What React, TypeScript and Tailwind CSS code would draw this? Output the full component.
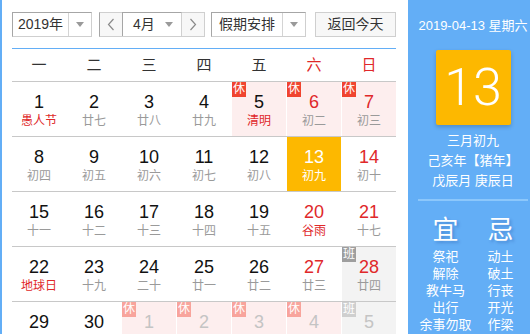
import React from "react";

type Cell = {
  d: number;
  l: string;
  red?: boolean;
  lred?: boolean;
  tag?: "休" | "班";
  sel?: boolean;
  faded?: boolean;
};

const rows: Cell[][] = [
  [
    { d: 1, l: "愚人节", lred: true },
    { d: 2, l: "廿七" },
    { d: 3, l: "廿八" },
    { d: 4, l: "廿九" },
    { d: 5, l: "清明", lred: true, tag: "休" },
    { d: 6, l: "初二", red: true, tag: "休" },
    { d: 7, l: "初三", red: true, tag: "休" },
  ],
  [
    { d: 8, l: "初四" },
    { d: 9, l: "初五" },
    { d: 10, l: "初六" },
    { d: 11, l: "初七" },
    { d: 12, l: "初八" },
    { d: 13, l: "初九", sel: true },
    { d: 14, l: "初十", red: true },
  ],
  [
    { d: 15, l: "十一" },
    { d: 16, l: "十二" },
    { d: 17, l: "十三" },
    { d: 18, l: "十四" },
    { d: 19, l: "十五" },
    { d: 20, l: "谷雨", red: true, lred: true },
    { d: 21, l: "十七", red: true },
  ],
  [
    { d: 22, l: "地球日", lred: true },
    { d: 23, l: "十九" },
    { d: 24, l: "二十" },
    { d: 25, l: "廿一" },
    { d: 26, l: "廿二" },
    { d: 27, l: "廿三", red: true },
    { d: 28, l: "廿四", red: true, tag: "班" },
  ],
  [
    { d: 29, l: "廿五" },
    { d: 30, l: "廿六" },
    { d: 1, l: "廿七", tag: "休", faded: true },
    { d: 2, l: "廿八", tag: "休", faded: true },
    { d: 3, l: "廿九", tag: "休", faded: true },
    { d: 4, l: "三十", tag: "休", faded: true },
    { d: 5, l: "立夏", tag: "班", faded: true },
  ],
];

const weekdays = ["一", "二", "三", "四", "五", "六", "日"];

function Caret() {
  return (
    <svg width="8" height="5" viewBox="0 0 8 5">
      <path d="M0 0 L8 0 L4 5 Z" fill="#9a9a9a" />
    </svg>
  );
}

function Chevron({ dir }: { dir: "l" | "r" }) {
  return (
    <svg width="8" height="13" viewBox="0 0 8 13">
      <path
        d={dir === "l" ? "M6.5 1 L1.5 6.5 L6.5 12" : "M1.5 1 L6.5 6.5 L1.5 12"}
        fill="none"
        stroke="#8a8a8a"
        strokeWidth="1.2"
      />
    </svg>
  );
}

function DayCell({ c }: { c: Cell }) {
  let bg = "bg-white";
  if (c.sel) bg = "bg-[#fdb800]";
  else if (c.tag === "休") bg = "bg-[#fdeeee]";
  else if (c.tag === "班") bg = "bg-[#f3f3f3]";

  let numColor = "text-[#111]";
  if (c.sel) numColor = "text-white";
  else if (c.faded) numColor = "text-[#c4c4c4]";
  else if (c.red) numColor = "text-[#e0282a]";

  let lColor = "text-[#9a9a9a]";
  if (c.sel) lColor = "text-white";
  else if (c.faded) lColor = "text-[#cccccc]";
  else if (c.lred) lColor = "text-[#e0282a]";

  let badge = "";
  if (c.tag === "休") badge = c.faded ? "bg-[#f8a49c]" : "bg-[#f0442f]";
  if (c.tag === "班") badge = c.faded ? "bg-[#cfcfcf]" : "bg-[#9e9e9e]";

  return (
    <div className={`relative h-[54px] ${bg} flex flex-col items-center pt-[10px]`}>
      {c.tag && (
        <div
          className={`absolute left-0 top-0 w-[14px] h-[15px] ${badge} text-white text-[12px] leading-[15px] text-center`}
        >
          {c.tag}
        </div>
      )}
      <div className={`text-[18px] leading-[20px] ${numColor}`}>{c.d}</div>
      <div className={`text-[12px] leading-[16px] mt-[1px] ${lColor}`}>{c.l}</div>
    </div>
  );
}

export default function App() {
  return (
    <div
      className="w-[530px] h-[334px] overflow-hidden flex bg-white"
      style={{ fontFamily: '"Liberation Sans", "Noto Sans CJK SC", sans-serif' }}
    >
      <div className="w-[2px] shrink-0 bg-[#63aef6]" />
      <div className="w-[406px] shrink-0 pl-[10px] pr-[12px] pt-[12px]">
        {/* toolbar */}
        <div className="flex h-[25px] text-[14px] text-[#333]">
          <div className="w-[80px] flex border border-[#cfcfcf] border-t-[#a6a6a6] border-l-[#a6a6a6]">
            <div className="flex-1 flex items-center justify-center">2019年</div>
            <div className="w-[23px] border-l border-[#d4d4d4] flex items-center justify-center">
              <Caret />
            </div>
          </div>
          <div className="ml-[7px] w-[106px] flex border border-[#cfcfcf] border-l-[#a6a6a6]">
            <div className="w-[22px] bg-[#f7f7f7] flex items-center justify-center">
              <Chevron dir="l" />
            </div>
            <div className="w-[60px] flex items-center border-l border-r border-[#d0d0d0] border-l-[#a6a6a6] border-t border-t-[#a6a6a6] -mt-px pl-[10px] pr-[8px] justify-between bg-white">
              <span>4月</span>
              <Caret />
            </div>
            <div className="flex-1 bg-[#f7f7f7] flex items-center justify-center">
              <Chevron dir="r" />
            </div>
          </div>
          <div className="ml-[6px] w-[95px] flex border border-[#cfcfcf] border-t-[#a6a6a6] border-l-[#a6a6a6]">
            <div className="flex-1 flex items-center justify-center">假期安排</div>
            <div className="w-[23px] border-l border-[#d4d4d4] flex items-center justify-center">
              <Caret />
            </div>
          </div>
          <div className="ml-[9px] w-[81px] border border-[#cfcfcf] bg-[#f7f7f7] flex items-center justify-center">
            返回今天
          </div>
        </div>
        <div className="mt-[11px] h-px bg-[#63aef6]" />
        {/* header */}
        <div className="grid grid-cols-7 gap-x-px h-[33px] border-b border-[#c8c8c8]">
          {weekdays.map((w, i) => (
            <div
              key={w}
              className={`flex items-center justify-center text-[15px] ${i >= 5 ? "text-[#e0282a]" : "text-[#333]"}`}
            >
              {w}
            </div>
          ))}
        </div>
        {rows.map((r, ri) => (
          <div key={ri} className="grid grid-cols-7 gap-x-px border-b border-[#c8c8c8] bg-white">
            {r.map((c, ci) => (
              <DayCell key={ci} c={c} />
            ))}
          </div>
        ))}
      </div>
      {/* right panel */}
      <div className="w-[130px] shrink-0 bg-[#63aef6] flex flex-col items-center text-white pt-[17px]">
        <div className="text-[13px] leading-[18px] whitespace-nowrap">2019-04-13 星期六</div>
        <div
          className="mt-[15px] w-[75px] h-[75px] bg-[#fdb800] rounded-[2px] shadow-[0_2px_4px_rgba(0,0,0,0.2)] flex items-center justify-center text-[52px] font-light"
          style={{ fontFamily: 'Roboto, "Liberation Sans", sans-serif' }}
        >
          13
        </div>
        <div className="mt-[6px] text-[13px] leading-[20px] text-center">
          <div>三月初九</div>
          <div>己亥年【猪年】</div>
          <div>戊辰月 庚辰日</div>
        </div>
        <div className="mt-[8px] w-[110px] h-[2px] bg-[#8cc7fb]" />
        <div className="mt-[14px] w-[110px] flex justify-between text-[26px] leading-[30px] [text-shadow:2px_2px_3px_rgba(0,40,120,0.25)]">
          <div className="w-[55px] text-center">宜</div>
          <div className="w-[55px] text-center">忌</div>
        </div>
        <div className="mt-[3px] w-[110px] flex justify-between text-[13px] leading-[17px]">
          <div className="w-[55px] flex flex-col items-center whitespace-nowrap">
            <div>祭祀</div>
            <div>解除</div>
            <div>教牛马</div>
            <div>出行</div>
            <div>余事勿取</div>
          </div>
          <div className="w-[55px] flex flex-col items-center whitespace-nowrap">
            <div>动土</div>
            <div>破土</div>
            <div>行丧</div>
            <div>开光</div>
            <div>作梁</div>
          </div>
        </div>
      </div>
    </div>
  );
}
